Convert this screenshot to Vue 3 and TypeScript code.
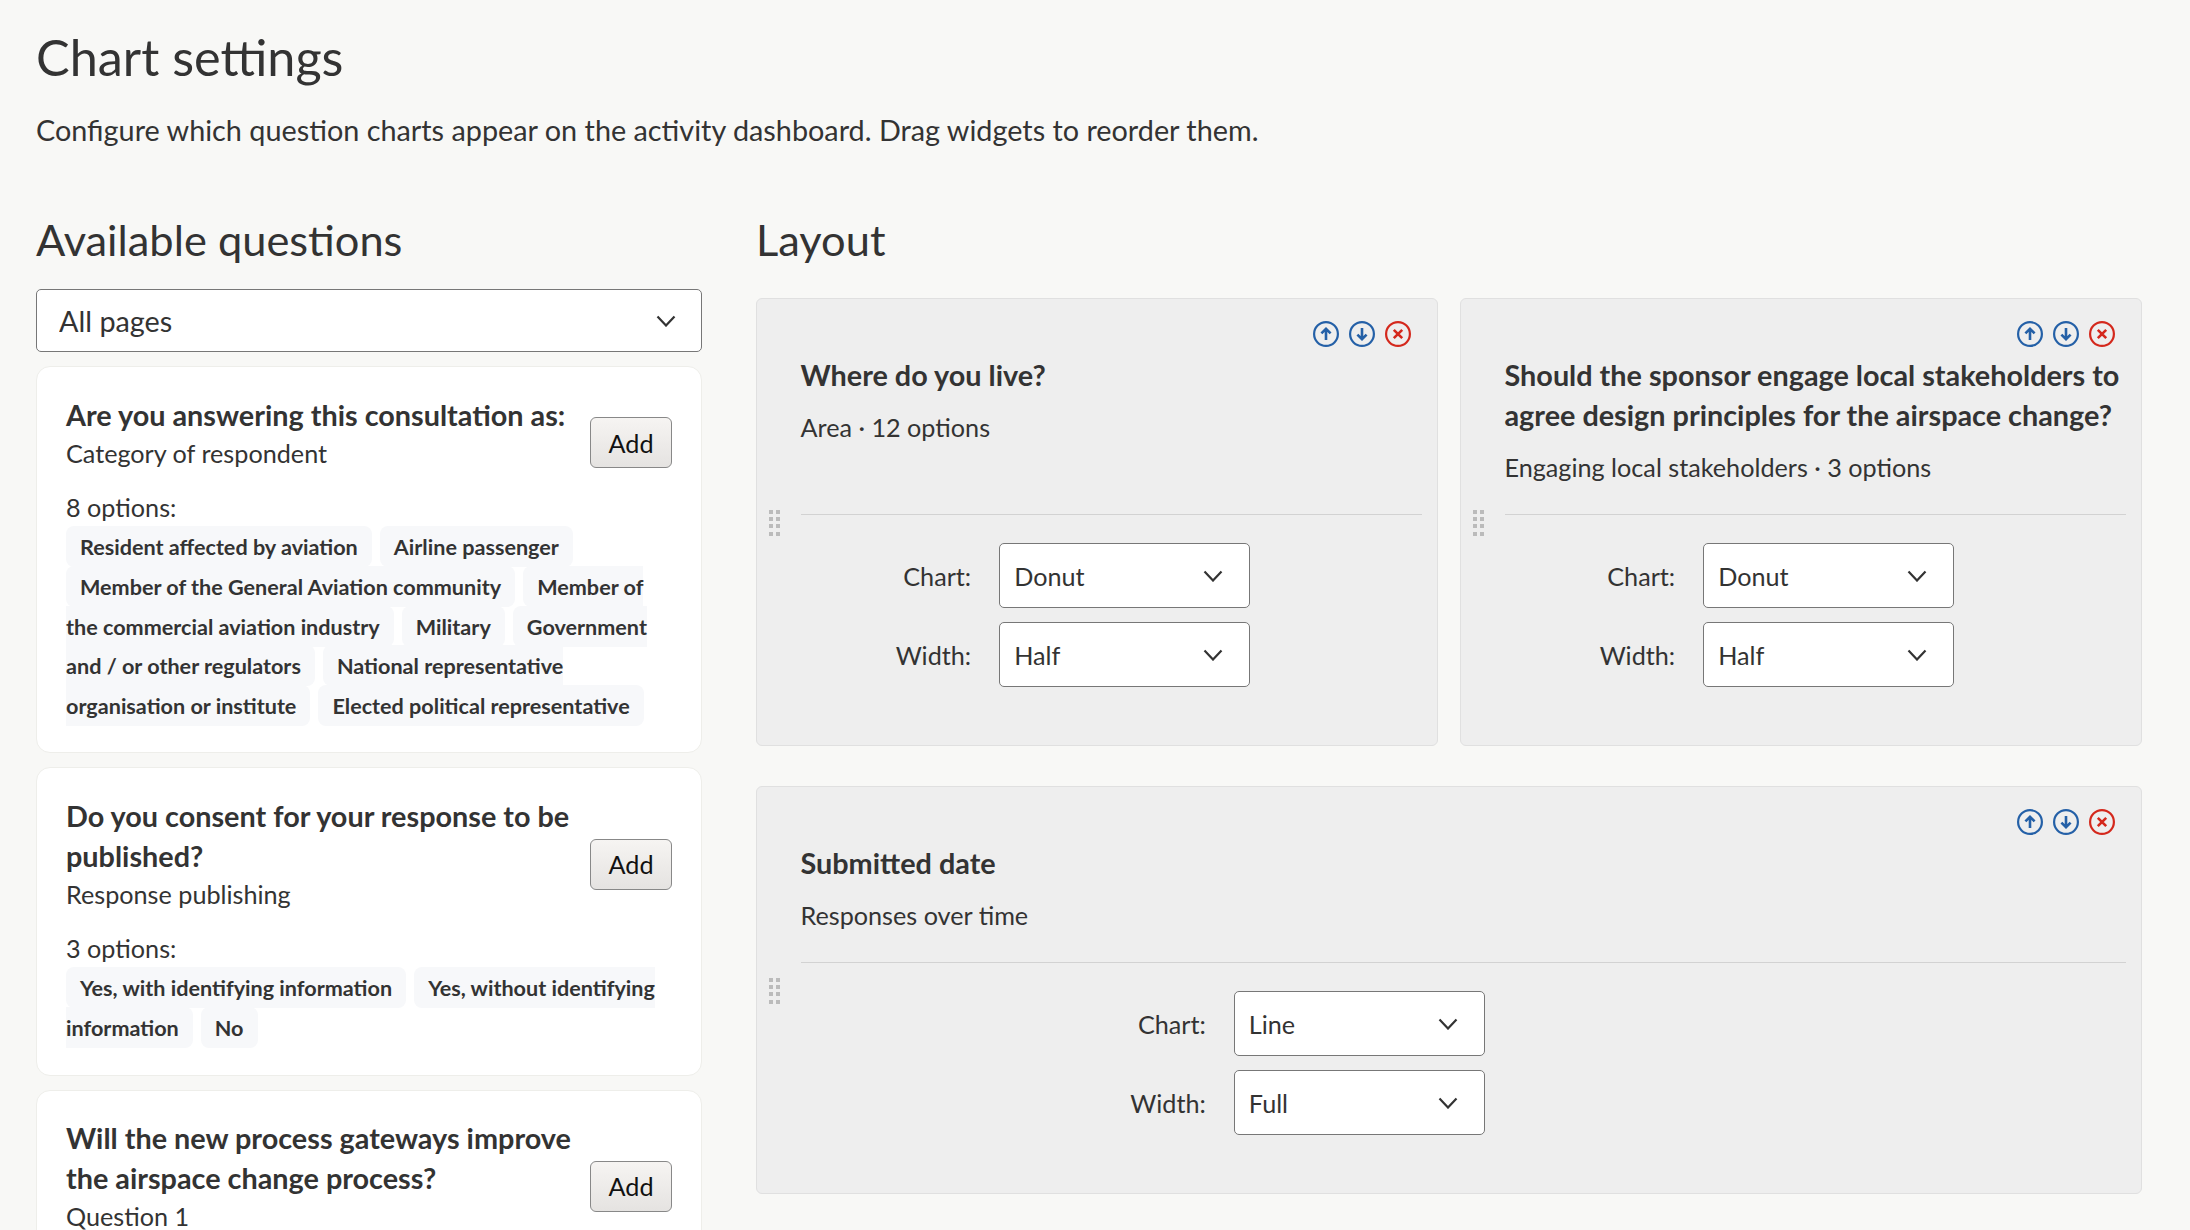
<template>
  <div class="page">
    <h1 class="page-title">Chart settings</h1>
    <p class="page-intro">
      Configure which question charts appear on the activity dashboard. Drag widgets to reorder them.
    </p>

    <div class="columns">
      <section class="available">
        <h2 class="section-title">Available questions</h2>
        <div class="select-wrap page-filter">
          <select v-model="pageFilter" class="select-field">
            <option>All pages</option>
          </select>
          <svg class="chevron" viewBox="0 0 20 12"><path d="M1.5 1.5 10 10.5l8.5-9" /></svg>
        </div>

        <article v-for="q in questions" :key="q.title" class="question-card">
          <div class="question-head">
            <div class="question-text">
              <h3 class="question-title">{{ q.title }}</h3>
              <div class="question-sub">{{ q.subtitle }}</div>
            </div>
            <button class="add-button" type="button">Add</button>
          </div>
          <template v-if="q.options.length">
            <div class="option-count">{{ q.options.length }} options:</div>
            <div class="option-list">
              <template v-for="opt in q.options" :key="opt">
                <span class="option-chip">{{ opt }}</span>{{ " " }}
              </template>
            </div>
          </template>
        </article>
      </section>

      <section class="layout">
        <h2 class="section-title">Layout</h2>
        <div class="widget-rows">
          <div v-for="(row, i) in rows" :key="i" class="widget-row">
            <article v-for="w in row" :key="w.title" class="widget">
              <div class="widget-actions">
                <svg class="action up" viewBox="0 0 26 26">
                  <circle cx="13" cy="13" r="11.9" />
                  <path d="M13 19V8M8.4 12.4 13 7.8l4.6 4.6" />
                </svg>
                <svg class="action up" viewBox="0 0 26 26">
                  <circle cx="13" cy="13" r="11.9" />
                  <path d="M13 7v11M8.4 13.6 13 18.2l4.6-4.6" />
                </svg>
                <svg class="action remove" viewBox="0 0 26 26">
                  <circle cx="13" cy="13" r="11.9" />
                  <path d="m8.8 8.8 8.4 8.4M17.2 8.8l-8.4 8.4" />
                </svg>
              </div>
              <div class="drag-handle">
                <i v-for="n in 8" :key="n"></i>
              </div>
              <div class="widget-info">
                <h3 class="widget-title">{{ w.title }}</h3>
                <div class="widget-sub">{{ w.subtitle }}</div>
              </div>
              <div class="widget-form">
                <label class="form-label">Chart:</label>
                <div class="select-wrap">
                  <select v-model="w.chart" class="select-field">
                    <option v-for="c in chartTypes" :key="c">{{ c }}</option>
                  </select>
                  <svg class="chevron" viewBox="0 0 20 12"><path d="M1.5 1.5 10 10.5l8.5-9" /></svg>
                </div>
                <label class="form-label">Width:</label>
                <div class="select-wrap">
                  <select v-model="w.width" class="select-field">
                    <option>Half</option>
                    <option>Full</option>
                  </select>
                  <svg class="chevron" viewBox="0 0 20 12"><path d="M1.5 1.5 10 10.5l8.5-9" /></svg>
                </div>
              </div>
            </article>
          </div>
        </div>
      </section>
    </div>
  </div>
</template>

<script setup lang="ts">
import { reactive, ref } from "vue";

interface Question {
  title: string;
  subtitle: string;
  options: string[];
}

interface Widget {
  title: string;
  subtitle: string;
  chart: string;
  width: string;
}

const pageFilter = ref("All pages");
const chartTypes = ["Donut", "Bar", "Line"];

const questions: Question[] = [
  {
    title: "Are you answering this consultation as:",
    subtitle: "Category of respondent",
    options: [
      "Resident affected by aviation",
      "Airline passenger",
      "Member of the General Aviation community",
      "Member of the commercial aviation industry",
      "Military",
      "Government and / or other regulators",
      "National representative organisation or institute",
      "Elected political representative",
    ],
  },
  {
    title: "Do you consent for your response to be published?",
    subtitle: "Response publishing",
    options: ["Yes, with identifying information", "Yes, without identifying information", "No"],
  },
  {
    title: "Will the new process gateways improve the airspace change process?",
    subtitle: "Question 1",
    options: [],
  },
];

const rows = reactive<Widget[][]>([
  [
    { title: "Where do you live?", subtitle: "Area · 12 options", chart: "Donut", width: "Half" },
    {
      title: "Should the sponsor engage local stakeholders to agree design principles for the airspace change?",
      subtitle: "Engaging local stakeholders · 3 options",
      chart: "Donut",
      width: "Half",
    },
  ],
  [{ title: "Submitted date", subtitle: "Responses over time", chart: "Line", width: "Full" }],
]);
</script>

<style>
html,
body {
  overflow: hidden;
  background: #f8f8f6;
}
</style>

<style scoped>
.page {
  box-sizing: border-box;
  height: 1230px;
  overflow: hidden;
  padding: 23px 48px 0 36px;
  font-family: Lato, "Liberation Sans", sans-serif;
  font-variant-ligatures: common-ligatures;
  color: #333;
}

.page-title {
  margin: 0;
  font-size: 50.4px;
  font-weight: 400;
  line-height: 68px;
}

.page-intro {
  margin: 19px 0 0;
  font-size: 28.8px;
  line-height: 40px;
}

.columns {
  display: flex;
  gap: 54px;
  margin-top: 60px;
}

.available {
  flex: 0 0 666px;
}

.layout {
  flex: 1;
  min-width: 0;
}

.section-title {
  margin: 0;
  font-size: 43.4px;
  font-weight: 400;
  line-height: 58px;
}

.page-filter {
  margin-top: 21px;
  height: 63px;
}

.select-wrap {
  position: relative;
}

.select-field {
  display: block;
  box-sizing: border-box;
  width: 100%;
  height: 100%;
  padding: 0 40px 0 22px;
  appearance: none;
  border: 1px solid #777;
  border-radius: 5px;
  background: #fff;
  color: #333;
  font: inherit;
  font-size: 28.8px;
}

.chevron {
  position: absolute;
  top: 50%;
  right: 26px;
  width: 20px;
  height: 12px;
  margin-top: -6px;
  fill: none;
  stroke: #333;
  stroke-width: 2.2;
  pointer-events: none;
}

.question-card {
  box-sizing: border-box;
  margin-top: 14px;
  padding: 27.8px 29px 26px;
  border: 1px solid #eeeeea;
  border-radius: 14px;
  background: #fff;
}

.question-head {
  display: flex;
  align-items: center;
  gap: 16px;
}

.question-text {
  flex: 1;
  min-width: 0;
}

.question-title {
  margin: 0;
  font-size: 28.8px;
  font-weight: 700;
  line-height: 40px;
}

.question-sub {
  font-size: 25.2px;
  line-height: 36px;
}

.add-button {
  flex: none;
  width: 82px;
  height: 51px;
  margin-top: 20px;
  padding: 0;
  border: 1px solid #888;
  border-radius: 6px;
  background: linear-gradient(#f6f4f2, #e5e3e1);
  color: #111;
  font: inherit;
  font-size: 25.2px;
}

.option-count {
  margin-top: 18.2px;
  font-size: 25.2px;
  line-height: 36px;
}

.option-list {
  margin-top: 2.5px;
  padding-right: 6px;
  font-size: 21.6px;
  font-weight: 700;
  line-height: 39.8px;
}

.option-chip {
  margin-right: 2.8px;
  padding: 7.5px 14px;
  border-radius: 8px;
  background: #f7f8fa;
  -webkit-box-decoration-break: slice;
  box-decoration-break: slice;
}

.widget-rows {
  display: flex;
  flex-direction: column;
  gap: 40px;
  margin-top: 30px;
}

.widget-row {
  display: flex;
  gap: 22px;
}

.widget {
  position: relative;
  flex: 1;
  min-width: 0;
  display: flex;
  flex-direction: column;
  box-sizing: border-box;
  padding: 56px 15px 58px 43.5px;
  border: 1px solid #e0e0e0;
  border-radius: 6px;
  background: #eee;
}

.widget-actions {
  position: absolute;
  top: 22px;
  right: 26px;
  display: flex;
  gap: 10px;
}

.action {
  width: 26px;
  height: 26px;
  fill: none;
  stroke-width: 2.2;
}

.action.up {
  stroke: #2460a7;
}

.action.remove {
  stroke: #d4281c;
}

.action path {
  stroke-width: 2.6;
}

.drag-handle {
  position: absolute;
  top: 50%;
  left: 12px;
  display: grid;
  grid-template-columns: 4px 4px;
  gap: 3.4px;
  margin-top: -12.5px;
}

.drag-handle i {
  width: 4px;
  height: 4px;
  background: #bbb;
}

.widget-info {
  flex: 1;
  padding-bottom: 27px;
  border-bottom: 1px solid #d2d2d2;
}

.widget-title {
  margin: 0;
  font-size: 28.8px;
  font-weight: 700;
  line-height: 40px;
}

.widget-sub {
  margin-top: 12px;
  font-size: 25.2px;
  line-height: 40px;
}

.widget-form {
  display: grid;
  grid-template-columns: calc(33.333% - 36.5px) 251px;
  column-gap: 28px;
  row-gap: 14px;
  align-items: center;
  margin-top: 28px;
}

.widget-form .select-wrap {
  height: 65px;
}

.widget-form .select-field {
  padding-left: 14px;
  font-size: 25.2px;
}

.widget-form .chevron {
  right: 27px;
}

.form-label {
  text-align: right;
  font-size: 25.2px;
}
</style>
